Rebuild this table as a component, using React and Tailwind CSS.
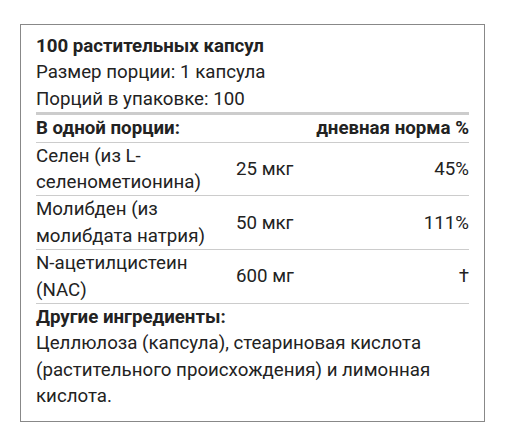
export default function App() {
  const rows = [
    ["Селен (из L-селенометионина)", "25 мкг", "45%"],
    ["Молибден (из молибдата натрия)", "50 мкг", "111%"],
    ["N-ацетилцистеин (NAC)", "600 мг", "†"],
  ];
  return (
    <div className="w-[509px] h-[444px] bg-white pt-[24px] pl-[20px]" style={{ fontFamily: "Roboto, 'Liberation Sans', sans-serif" }}>
      <div className="w-[465px] border border-[#888] pt-[8px] pb-[11px] px-[15px] text-[18.7px] leading-[26.4px] text-[#222]">
        <div className="font-bold">100 растительных капсул</div>
        <div>Размер порции: 1 капсула</div>
        <div>Порций в упаковке: 100</div>
        <div className="border-t-[3px] border-[#ccc] border-b flex justify-between font-bold">
          <span>В одной порции:</span>
          <span>дневная норма %</span>
        </div>
        {rows.map((r, i) => (
          <div key={i} className="grid grid-cols-[200px_1fr_auto] items-center border-b border-[#ccc]">
            <div className="pr-[10px]">{r[0]}</div>
            <div>{r[1]}</div>
            <div className="text-right">{r[2]}</div>
          </div>
        ))}
        <div className="font-bold">Другие ингредиенты:</div>
        <div>Целлюлоза (капсула), стеариновая кислота (растительного происхождения) и лимонная кислота.</div>
      </div>
    </div>
  );
}
